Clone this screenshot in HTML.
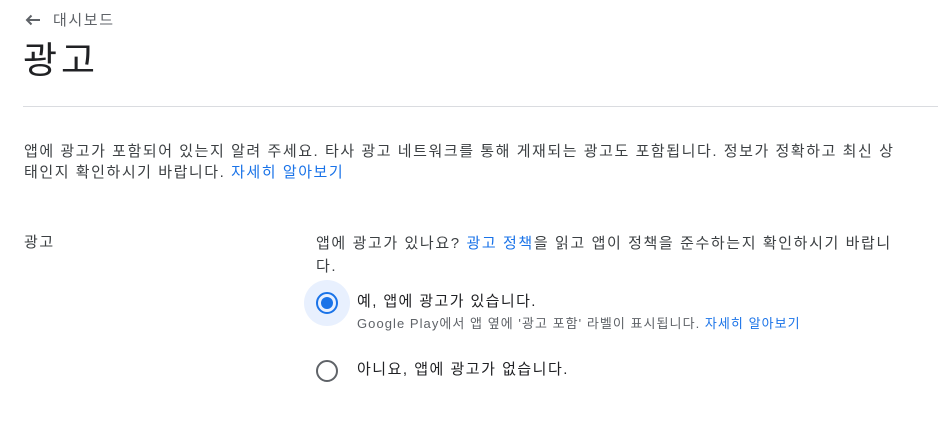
<!DOCTYPE html>
<html><head><meta charset="utf-8"><style>
body{margin:0;width:945px;height:436px;background:#fff;font-family:"Liberation Sans","Noto Sans CJK KR",sans-serif;color:#3c4043;position:relative;overflow:hidden}
.a{position:absolute;white-space:nowrap;letter-spacing:1.6px}
a{color:#1a73e8;text-decoration:none}
</style></head><body>
<div class="a" style="left:25px;top:10px;font-size:15px;color:#5f6368;line-height:22px"><svg width="16" height="12" viewBox="0 0 16 12" style="vertical-align:-1px;margin-right:12px"><path d="M15 6H2M6.5 1.5L2 6l4.5 4.5" stroke="#5f6368" stroke-width="2" fill="none"/></svg>대시보드</div>
<div class="a" style="left:23px;top:38px;font-size:37px;color:#202124;line-height:46px;letter-spacing:4px">광고</div>
<div class="a" style="left:23px;top:106px;width:915px;height:1px;background:#dadce0"></div>
<div class="a" style="left:24px;top:141px;font-size:15px;line-height:21px;letter-spacing:1.55px">앱에 광고가 포함되어 있는지 알려 주세요. 타사 광고 네트워크를 통해 게재되는 광고도 포함됩니다. 정보가 정확하고 최신 상<br>태인지 확인하시기 바랍니다. <a>자세히 알아보기</a></div>
<div class="a" style="left:24px;top:232px;font-size:15px;line-height:21px">광고</div>
<div class="a" style="left:316px;top:232px;font-size:15px;line-height:23px">앱에 광고가 있나요? <a>광고 정책</a>을 읽고 앱이 정책을 준수하는지 확인하시기 바랍니<br>다.</div>
<div class="a" style="left:304px;top:280px;width:46px;height:46px;border-radius:50%;background:#e8f0fe"></div>
<div class="a" style="left:316px;top:292px;width:18px;height:18px;border-radius:50%;border:2px solid #1a73e8"></div>
<div class="a" style="left:321px;top:297px;width:12px;height:12px;border-radius:50%;background:#1a73e8"></div>
<div class="a" style="left:357px;top:291px;font-size:15px;line-height:21px;color:#202124;letter-spacing:1.4px">예, 앱에 광고가 있습니다.</div>
<div class="a" style="left:357px;top:315px;font-size:13px;line-height:18px;color:#5f6368;letter-spacing:1.05px">Google Play에서 앱 옆에 '광고 포함' 라벨이 표시됩니다. <a>자세히 알아보기</a></div>
<div class="a" style="left:316px;top:360px;width:18px;height:18px;border-radius:50%;border:2px solid #5f6368"></div>
<div class="a" style="left:357px;top:359px;font-size:15px;line-height:21px;color:#202124;letter-spacing:1.5px">아니요, 앱에 광고가 없습니다.</div>
</body></html>
